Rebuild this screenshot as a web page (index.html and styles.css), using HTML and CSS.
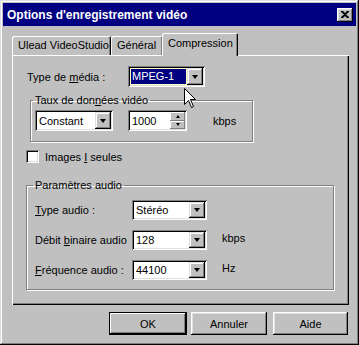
FILE: index.html
```html
<!DOCTYPE html>
<html lang="fr">
<head>
    <meta charset="UTF-8">
    <title>Options d'enregistrement vidéo</title>
    <link rel="stylesheet" href="styles.css">
</head>
<body>
    <div class="dialog">
        <div class="titlebar">
            <span class="title">Options d'enregistrement vidéo</span>
            <span class="close">
                <svg width="8" height="7" viewBox="0 0 8 7"><path d="M0 0h2l2 2 2-2h2v1L5 3.5 8 6v1H6L4 5 2 7H0V6l3-2.5L0 1z" fill="#000"/></svg>
            </span>
        </div>

        <div class="content">
            <div class="tabs">
                <div class="tab tab-ulead">Ulead VideoStudio</div>
                <div class="tab tab-general">Général</div>
                <div class="tab tab-active">Compression</div>
            </div>

            <div class="panel">
                <div class="row row-media">
                    <span class="label label-media">Type de <u>m</u>édia :</span>
                    <div class="combo combo-media">
                        <span class="value selected">MPEG-1</span>
                        <span class="drop"><i class="arrow"></i></span>
                    </div>
                </div>

                <fieldset class="group group-video">
                    <legend>Taux de don<u>n</u>ées vidéo</legend>
                    <div class="row">
                        <div class="combo combo-rate">
                            <span class="value">Constant</span>
                            <span class="drop"><i class="arrow"></i></span>
                        </div>
                        <div class="spin">
                            <span class="value">1000</span>
                            <span class="spin-btns">
                                <span class="spin-btn"><i class="arrow up"></i></span>
                                <span class="spin-btn"><i class="arrow"></i></span>
                            </span>
                        </div>
                        <span class="unit unit-video">kbps</span>
                    </div>
                </fieldset>

                <div class="row row-check">
                    <span class="checkbox"></span>
                    <span class="label">Images <u>I</u> seules</span>
                </div>

                <fieldset class="group group-audio">
                    <legend>Paramètres audio</legend>
                    <div class="row audio-row">
                        <span class="label label-audio"><u>T</u>ype audio :</span>
                        <div class="combo combo-audio">
                            <span class="value">Stéréo</span>
                            <span class="drop"><i class="arrow"></i></span>
                        </div>
                    </div>
                    <div class="row audio-row">
                        <span class="label label-audio">Débit <u>b</u>inaire audio</span>
                        <div class="combo combo-audio">
                            <span class="value">128</span>
                            <span class="drop"><i class="arrow"></i></span>
                        </div>
                        <span class="unit unit-audio">kbps</span>
                    </div>
                    <div class="row audio-row">
                        <span class="label label-audio"><u>F</u>réquence audio :</span>
                        <div class="combo combo-audio">
                            <span class="value">44100</span>
                            <span class="drop"><i class="arrow"></i></span>
                        </div>
                        <span class="unit unit-audio">Hz</span>
                    </div>
                </fieldset>
            </div>

            <div class="buttons">
                <button class="btn btn-default">OK</button>
                <button class="btn">Annuler</button>
                <button class="btn btn-help">Aide</button>
            </div>
        </div>

        <svg class="cursor" width="13" height="20" viewBox="0 0 13 20">
            <path d="M0.5 0.5V16.5L4.5 12.5L7.5 19.5L9.5 18.5L6.5 11.5H11.5Z" fill="#fff" stroke="#000" stroke-width="1"/>
        </svg>
    </div>
</body>
</html>
```

FILE: styles.css
```css
* {
    box-sizing: border-box;
    margin: 0;
    padding: 0;
}

body {
    font-family: 'Liberation Sans', Arial, sans-serif;
    font-size: 11px;
    color: #000;
    background: #c0c0c0;
}

.dialog {
    position: relative;
    width: 359px;
    height: 345px;
    padding: 3px 3px 3px 3px;
    background: #c0c0c0;
    box-shadow: inset -1px -1px #000, inset 1px 1px #dfdfdf, inset -2px -2px #808080, inset 2px 2px #fff;
}

.titlebar {
    display: flex;
    align-items: center;
    justify-content: space-between;
    height: 23px;
    padding: 0 3px 0 4px;
    background: #000080;
    color: #fff;
}

.title {
    font-weight: bold;
    font-size: 12px;
}

.close {
    display: flex;
    align-items: center;
    justify-content: center;
    width: 16px;
    height: 14px;
    background: #c0c0c0;
    box-shadow: inset -1px -1px #000, inset 1px 1px #fff, inset -2px -2px #808080, inset 2px 2px #dfdfdf;
}

.content {
    padding: 7px 7px 0 9px;
}

/* onglets */
.tabs {
    display: flex;
    align-items: flex-end;
    height: 22px;
}

.tab {
    height: 19px;
    line-height: 19px;
    padding: 0 6px;
    border-radius: 2px 2px 0 0;
    box-shadow: inset 1px 1px #fff, inset -1px 0 #000, inset -2px 0 #808080;
    white-space: nowrap;
}

.tab-ulead {
    width: 99px;
}

.tab-general {
    width: 52px;
}

.tab-active {
    position: relative;
    width: 76px;
    height: 23px;
    line-height: 21px;
    margin-left: -1px;
    margin-bottom: -1px;
    background: #c0c0c0;
    z-index: 1;
}

.panel {
    height: 250px;
    padding: 2px;
    box-shadow: inset 1px 1px #fff, inset -1px -1px #000, inset -2px -2px #808080;
}

.row {
    display: flex;
    align-items: center;
}

.row-media {
    margin: 9px 0 0 13px;
}

.label-media {
    width: 101px;
}

/* champs */
.combo,
.spin {
    display: flex;
    align-items: center;
    height: 21px;
    padding: 2px;
    background: #fff;
    box-shadow: inset 1px 1px #808080, inset -1px -1px #fff, inset 2px 2px #000, inset -2px -2px #dfdfdf;
}

.combo .value,
.spin .value {
    flex: 1;
    padding-left: 2px;
}

.combo .value.selected {
    margin: 1px 1px 1px 1px;
    padding-left: 1px;
    line-height: 15px;
    background: #000080;
    color: #fff;
    outline: 1px dotted #ffff80;
}

.drop {
    display: flex;
    align-items: center;
    justify-content: center;
    width: 16px;
    height: 17px;
    background: #c0c0c0;
    box-shadow: inset -1px -1px #000, inset 1px 1px #dfdfdf, inset -2px -2px #808080, inset 2px 2px #fff;
}

.arrow {
    width: 0;
    height: 0;
    border-left: 3.5px solid transparent;
    border-right: 3.5px solid transparent;
    border-top: 4px solid #000;
}

.arrow.up {
    border-top: none;
    border-bottom: 4px solid #000;
}

.combo-media {
    width: 77px;
}

.combo-rate {
    width: 78px;
}

.spin {
    width: 59px;
    margin-left: 15px;
}

.spin-btns {
    display: flex;
    flex-direction: column;
    width: 15px;
    height: 17px;
}

.spin-btn {
    display: flex;
    align-items: center;
    justify-content: center;
    flex: 1;
    background: #c0c0c0;
    box-shadow: inset -1px -1px #808080, inset 1px 1px #fff;
}

.spin-btn .arrow {
    border-left-width: 2.5px;
    border-right-width: 2.5px;
    border-top-width: 3px;
}

.spin-btn .arrow.up {
    border-bottom-width: 3px;
}

.unit-video {
    margin-left: 26px;
}

/* cadres */
.group {
    border: 1px solid #808080;
    box-shadow: inset 1px 1px #fff, 1px 1px #fff;
}

.group legend {
    padding: 0 2px;
    margin-left: -2px;
    line-height: 13px;
}

.group-video {
    width: 223px;
    margin: 7px 0 0 16px;
    padding: 3px 4px 10px 4px;
}

.row-check {
    margin: 8px 0 0 12px;
}

.checkbox {
    width: 13px;
    height: 13px;
    margin-right: 6px;
    background: #fff;
    box-shadow: inset 1px 1px #808080, inset -1px -1px #fff, inset 2px 2px #000, inset -2px -2px #dfdfdf;
}

.group-audio {
    width: 308px;
    margin: 16px 0 0 12px;
    padding: 8px 8px 9px 8px;
}

.audio-row {
    height: 20px;
    margin-bottom: 10px;
}

.audio-row:last-child {
    margin-bottom: 0;
}

.label-audio {
    width: 97px;
}

.combo-audio {
    width: 75px;
    height: 20px;
}

.combo-audio .drop {
    height: 16px;
}

.unit-audio {
    margin: 0 0 4px 15px;
}

/* boutons */
.buttons {
    display: flex;
    justify-content: flex-end;
    gap: 4px;
    margin-top: 7px;
    padding-right: 1px;
}

.btn {
    width: 76px;
    height: 23px;
    border: none;
    background: #c0c0c0;
    font-family: 'Liberation Sans', Arial, sans-serif;
    font-size: 11px;
    color: #000;
    box-shadow: inset -1px -1px #000, inset 1px 1px #fff, inset -2px -2px #808080, inset 2px 2px #dfdfdf;
}

.btn-default {
    width: 78px;
    border: 1px solid #000;
    box-shadow: inset -1px -1px #000, inset 1px 1px #fff, inset -2px -2px #808080;
}

.btn-help {
    width: 75px;
    margin-left: 2px;
}

.cursor {
    position: absolute;
    left: 184px;
    top: 88px;
}
```
